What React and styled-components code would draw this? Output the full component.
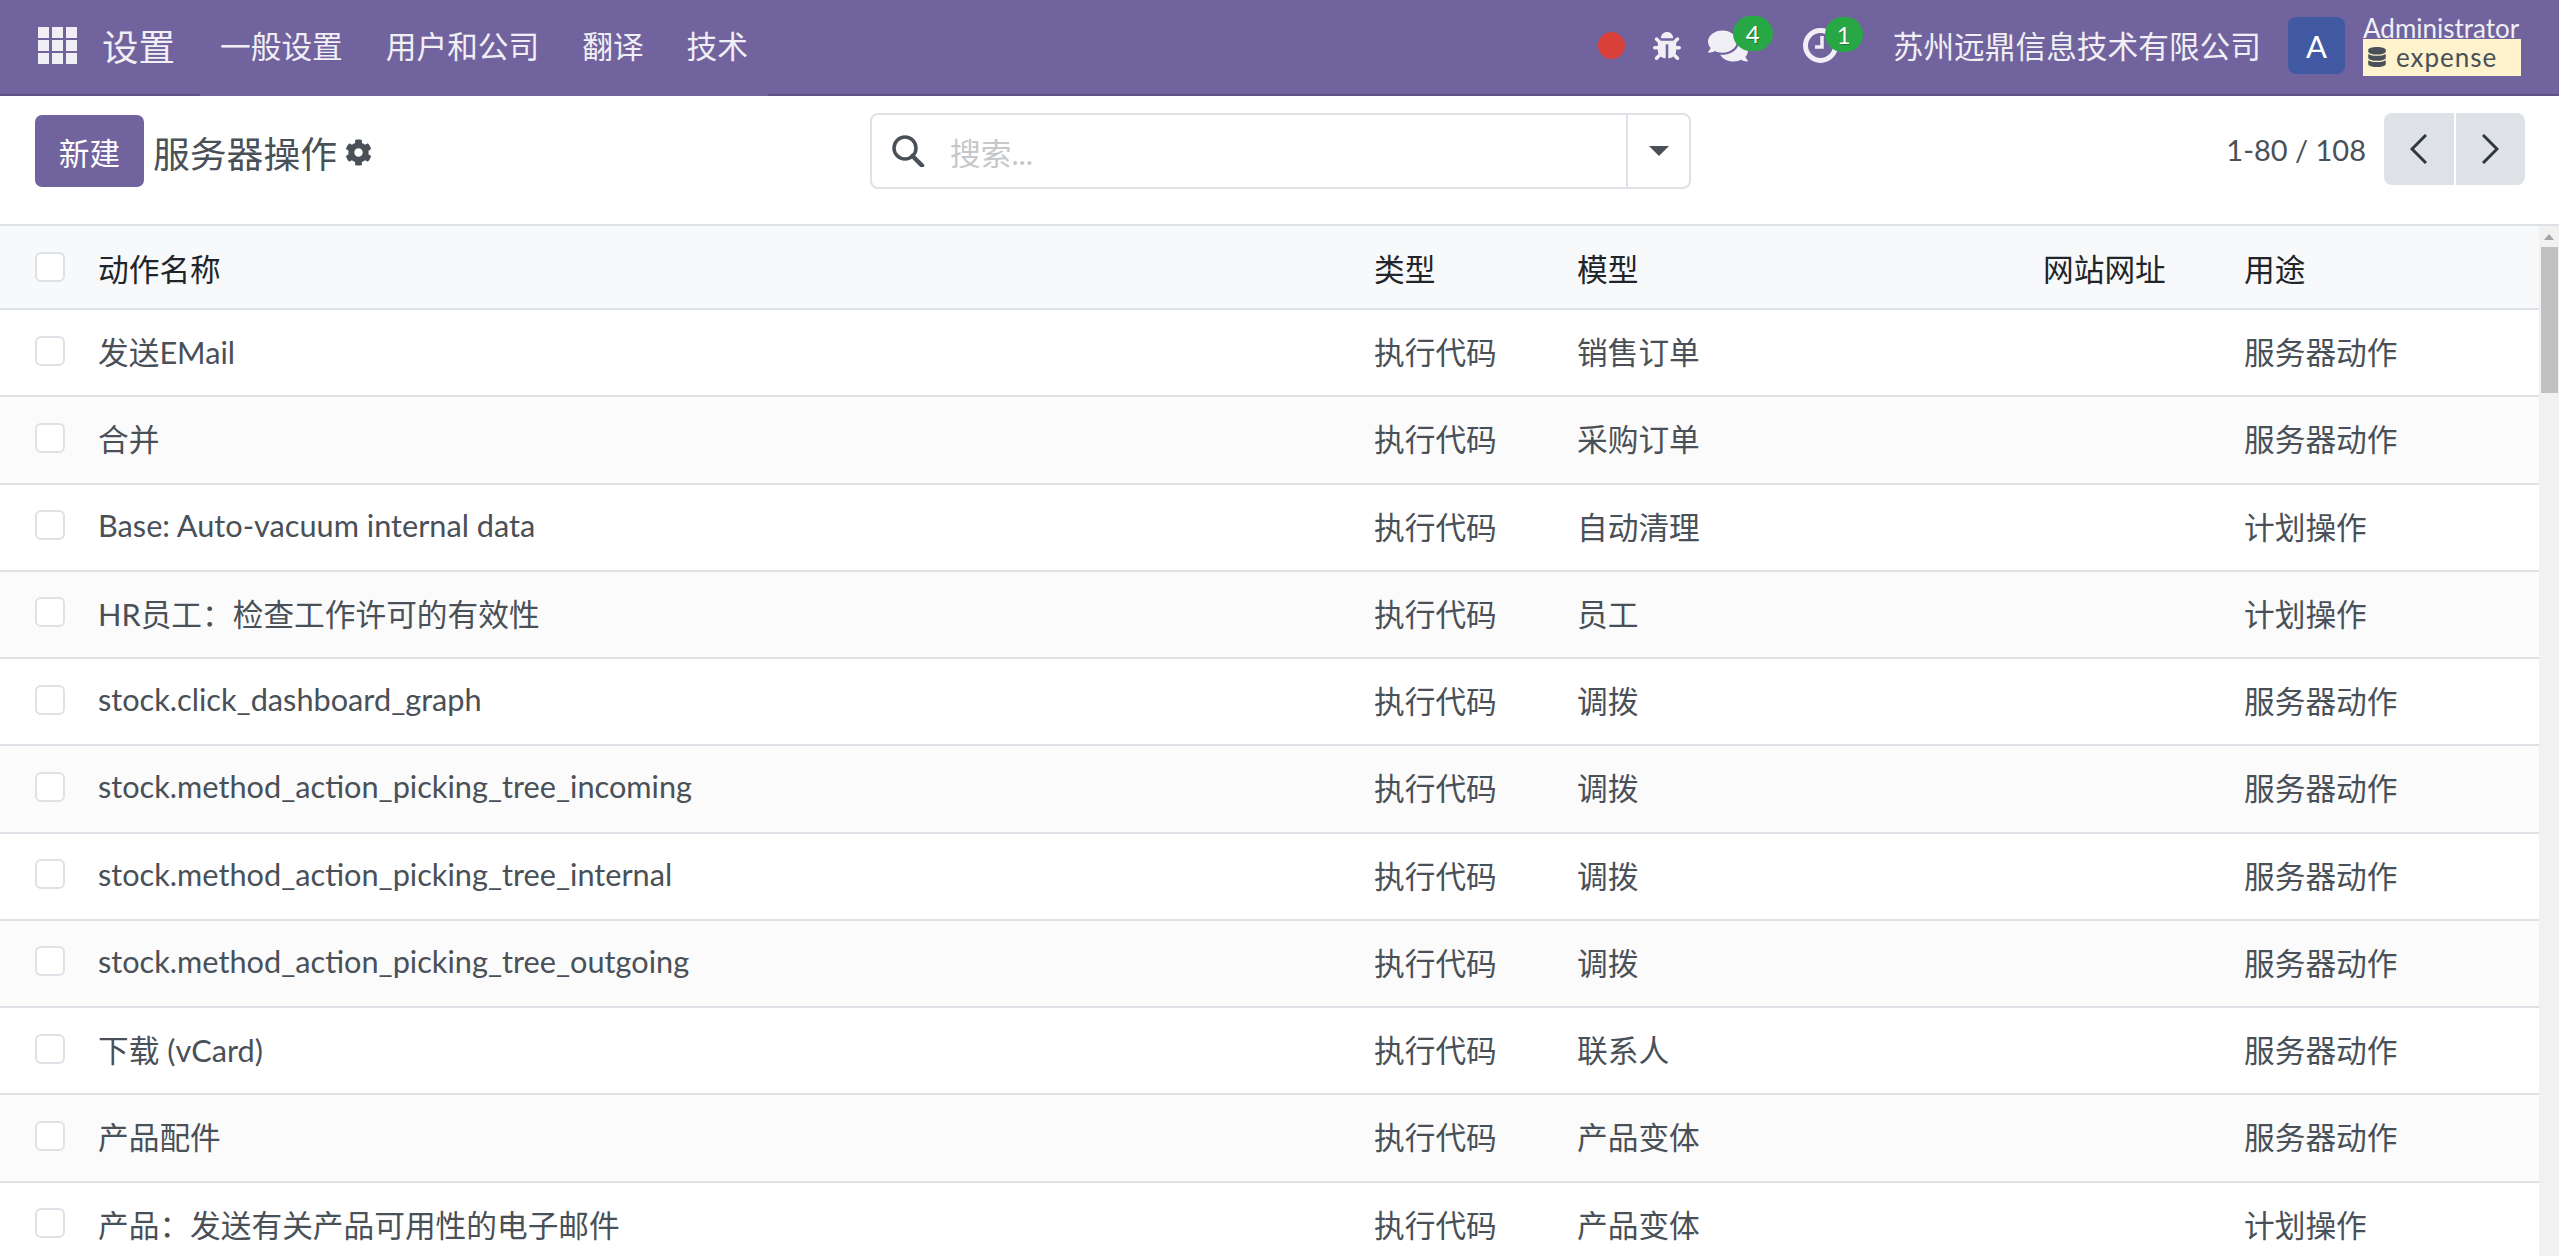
import React from 'react';
import styled, { createGlobalStyle } from 'styled-components';
import { FaCog, FaBug, FaComments, FaDatabase } from 'react-icons/fa';

const FONT = '"Lato", "Noto Sans CJK SC", sans-serif';

const Global = createGlobalStyle`
  html, body { margin: 0; padding: 0; height: 100%; overflow: hidden; background: #fff; }
  body { font-family: ${FONT}; color: #495057; }
  * { box-sizing: border-box; }
`;

const Page = styled.div`
  height: 1256px;
  display: flex;
  flex-direction: column;
  overflow: hidden;
`;

const Nav = styled.header`
  height: 96px;
  flex: none;
  position: relative;
  background: #71639e;
  border-bottom: 2px solid #5f5385;
  display: flex;
  align-items: center;
  color: #f0eff5;
  padding: 0 38px 3px 38px;
  &::after {
    content: '';
    position: absolute;
    left: 200px;
    width: 568px;
    bottom: -2px;
    height: 2px;
    background: #71639e;
  }
`;
const AppGrid = styled.div`
  width: 39px;
  height: 37px;
  display: grid;
  grid-template-columns: repeat(3, 11px);
  grid-auto-rows: 11px;
  gap: 2px 3px;
  margin-right: 25px;
  & > i { background: #f0eff5; display: block; }
`;
const Brand = styled.span`
  font-size: 36.5px;
  margin-right: 45px;
  white-space: nowrap;
`;
const MenuItem = styled.span`
  font-size: 30.7px;
  margin-right: 43px;
  padding-bottom: 2px;
  white-space: nowrap;
`;
const NavRight = styled.div`
  margin-left: auto;
  display: flex;
  align-items: center;
`;
const RedDot = styled.span`
  width: 27px;
  height: 27px;
  border-radius: 50%;
  background: #d9403a;
  margin-right: 28px;
`;
const IconSlot = styled.span`
  position: relative;
  display: flex;
  align-items: center;
  margin-right: ${p => p.$gap}px;
  font-size: ${p => p.$size}px;
`;
const Badge = styled.span`
  position: absolute;
  left: ${p => p.$left}px;
  top: ${p => p.$top}px;
  width: ${p => p.$w}px;
  height: 35px;
  border-radius: 18px;
  background: #28a745;
  color: #fff;
  font-size: 24px;
  text-shadow: 1px 1px 0 rgba(0, 0, 0, 0.3);
  display: flex;
  align-items: center;
  justify-content: center;
`;
const Company = styled.span`
  font-size: 30.7px;
  margin-right: 27px;
  padding-bottom: 2px;
  white-space: nowrap;
`;
const Avatar = styled.span`
  width: 57px;
  height: 57px;
  border-radius: 8px;
  background: #4059a2;
  color: #fff;
  font-size: 31px;
  display: flex;
  align-items: center;
  justify-content: center;
  margin-right: 18px;
`;
const User = styled.div`
  width: 158px;
  display: flex;
  flex-direction: column;
`;
const UserName = styled.span`
  font-size: 26px;
  line-height: 24px;
  height: 23px;
  white-space: nowrap;
`;
const Db = styled.span`
  height: 37px;
  background: #fff3cd;
  color: #495057;
  font-size: 26px;
  letter-spacing: 1px;
  display: flex;
  align-items: center;
  gap: 9px;
  padding-left: 4px;
  white-space: nowrap;
`;

const Toolbar = styled.div`
  height: 128px;
  flex: none;
  display: flex;
  align-items: flex-start;
  padding: 19px 34px 0 35px;
`;
const NewButton = styled.button`
  width: 109px;
  height: 72px;
  border: 0;
  border-radius: 7px;
  background: #71639e;
  color: #fff;
  font: 30.7px ${FONT};
  padding: 0;
  margin-right: 9px;
`;
const Title = styled.div`
  width: 717px;
  height: 72px;
  padding-top: 2px;
  display: flex;
  align-items: center;
  gap: 8px;
  font-size: 36.8px;
  color: #495057;
`;
const Search = styled.div`
  width: 821px;
  height: 76px;
  margin-top: -2px;
  border: 2px solid #dee2e6;
  border-radius: 8px;
  display: flex;
  align-items: center;
`;
const SearchInput = styled.div`
  flex: 1;
  height: 100%;
  display: flex;
  align-items: center;
  padding-left: 20px;
  gap: 25px;
  font-size: 30.7px;
  color: #c5c8cb;
`;
const SearchDrop = styled.div`
  width: 63px;
  height: 100%;
  border-left: 2px solid #dee2e6;
  display: flex;
  align-items: center;
  justify-content: center;
`;
const Caret = styled.span`
  width: 0;
  height: 0;
  border-left: 10px solid transparent;
  border-right: 10px solid transparent;
  border-top: 10px solid #495057;
`;
const Pager = styled.div`
  margin-left: auto;
  margin-top: -2px;
  height: 72px;
  display: flex;
  align-items: center;
  font-size: 29px;
  color: #495057;
`;
const PagerText = styled.span`
  margin-right: 18px;
  white-space: nowrap;
`;
const PagerButton = styled.span`
  width: 69.5px;
  height: 72px;
  background: #dee2e6;
  color: #2f3640;
  display: flex;
  align-items: center;
  justify-content: center;
  border-radius: ${p => (p.$left ? '8px 0 0 8px' : '0 8px 8px 0')};
  margin-left: ${p => (p.$left ? 0 : 2)}px;
`;

const Body = styled.div`
  flex: 1;
  min-height: 0;
  display: flex;
  border-top: 2px solid #dee2e6;
`;
const List = styled.div`
  flex: 1;
  min-width: 0;
  overflow: hidden;
`;
const cols = '98px 1276px 203px 466px 201px 1fr';
const HeadRow = styled.div`
  display: grid;
  grid-template-columns: ${cols};
  align-items: center;
  height: 84px;
  background: #f8f9fa;
  border-bottom: 2px solid #dee2e6;
  font-size: 30.7px;
  color: #212529;
`;
const Row = styled.div`
  display: grid;
  grid-template-columns: ${cols};
  align-items: center;
  height: 87.25px;
  padding-bottom: 4px;
  border-bottom: 2px solid #dee2e6;
  font-size: 30.7px;
  color: #495057;
  background: ${p => (p.$odd ? '#fbfbfb' : '#fff')};
  white-space: nowrap;
`;
const Check = styled.span`
  width: 30px;
  height: 30px;
  margin-left: 35px;
  border: 2px solid #dee2e6;
  border-radius: 6px;
  background: #fff;
  display: block;
`;
const Scrollbar = styled.div`
  width: 20px;
  flex: none;
  background: #f1f1f1;
  display: flex;
  flex-direction: column;
  align-items: center;
`;
const ScrollArrow = styled.span`
  width: 0;
  height: 0;
  margin: 8px 0 7px;
  border-left: 5px solid transparent;
  border-right: 5px solid transparent;
  border-bottom: 6px solid #a3a3a3;
`;
const ScrollThumb = styled.span`
  width: 17px;
  height: 146px;
  background: #c1c1c1;
`;

const ClockIcon = () => (
  <svg width="35" height="35" viewBox="0 0 35 35" fill="none" stroke="currentColor">
    <circle cx="17.5" cy="17.5" r="15" strokeWidth="5" />
    <path d="M19 8v11h-7" strokeWidth="3.5" />
  </svg>
);
const SearchIcon = () => (
  <svg width="33" height="32" viewBox="0 0 33 32" fill="none" stroke="#495057">
    <circle cx="13" cy="13" r="11" strokeWidth="3.5" />
    <path d="M20.5 21L30 30.5" strokeWidth="4.5" strokeLinecap="round" />
  </svg>
);
const Chevron = ({ dir }) => (
  <svg width="17" height="30" viewBox="0 0 17 30" fill="none" stroke="currentColor" strokeWidth="3">
    <path d={dir === 'left' ? 'M16 1L2 15l14 14' : 'M1 1l14 14L1 29'} />
  </svg>
);

const rows = [
  ['发送EMail', '销售订单', '服务器动作'],
  ['合并', '采购订单', '服务器动作'],
  ['Base: Auto-vacuum internal data', '自动清理', '计划操作'],
  ['HR员工：检查工作许可的有效性', '员工', '计划操作'],
  ['stock.click_dashboard_graph', '调拨', '服务器动作'],
  ['stock.method_action_picking_tree_incoming', '调拨', '服务器动作'],
  ['stock.method_action_picking_tree_internal', '调拨', '服务器动作'],
  ['stock.method_action_picking_tree_outgoing', '调拨', '服务器动作'],
  ['下载 (vCard)', '联系人', '服务器动作'],
  ['产品配件', '产品变体', '服务器动作'],
  ['产品：发送有关产品可用性的电子邮件', '产品变体', '计划操作'],
];

export default function App() {
  return (
    <Page>
      <Global />
      <Nav>
        <AppGrid>{Array.from({ length: 9 }, (_, i) => <i key={i} />)}</AppGrid>
        <Brand>设置</Brand>
        <MenuItem>一般设置</MenuItem>
        <MenuItem>用户和公司</MenuItem>
        <MenuItem>翻译</MenuItem>
        <MenuItem>技术</MenuItem>
        <NavRight>
          <RedDot />
          <IconSlot $size={28} $gap={27}><FaBug /></IconSlot>
          <IconSlot $size={40} $gap={55}>
            <FaComments />
            <Badge $left={25} $top={-10} $w={40}>4</Badge>
          </IconSlot>
          <IconSlot $size={35} $gap={55}>
            <ClockIcon />
            <Badge $left={22} $top={-11} $w={38}>1</Badge>
          </IconSlot>
          <Company>苏州远鼎信息技术有限公司</Company>
          <Avatar>A</Avatar>
          <User>
            <UserName>Administrator</UserName>
            <Db><FaDatabase size={20} />expense</Db>
          </User>
        </NavRight>
      </Nav>
      <Toolbar>
        <NewButton>新建</NewButton>
        <Title>服务器操作<FaCog size={27} /></Title>
        <Search>
          <SearchInput><SearchIcon />搜索...</SearchInput>
          <SearchDrop><Caret /></SearchDrop>
        </Search>
        <Pager>
          <PagerText>1-80 / 108</PagerText>
          <PagerButton $left><Chevron dir="left" /></PagerButton>
          <PagerButton><Chevron dir="right" /></PagerButton>
        </Pager>
      </Toolbar>
      <Body>
        <List>
          <HeadRow>
            <Check />
            <span>动作名称</span>
            <span>类型</span>
            <span>模型</span>
            <span>网站网址</span>
            <span>用途</span>
          </HeadRow>
          {rows.map((r, i) => (
            <Row key={i} $odd={i % 2 === 1}>
              <Check />
              <span>{r[0]}</span>
              <span>执行代码</span>
              <span>{r[1]}</span>
              <span />
              <span>{r[2]}</span>
            </Row>
          ))}
        </List>
        <Scrollbar>
          <ScrollArrow />
          <ScrollThumb />
        </Scrollbar>
      </Body>
    </Page>
  );
}
